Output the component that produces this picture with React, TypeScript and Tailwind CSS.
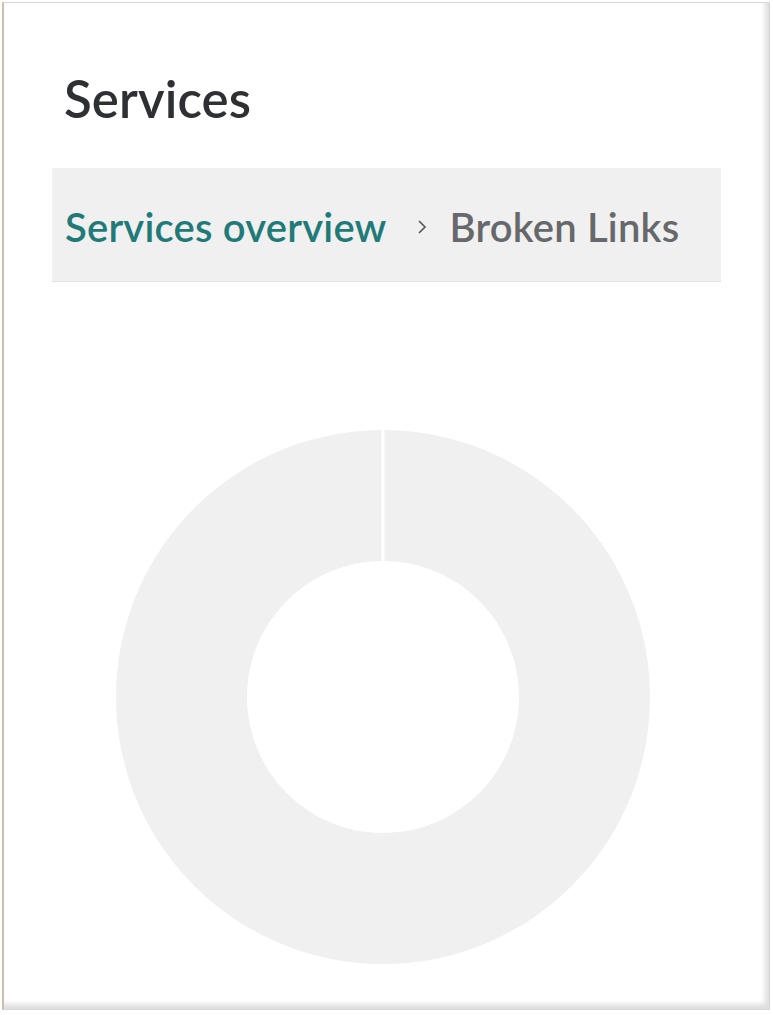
import React from "react";

// donut arc, single value with a thin gap at 12 o'clock
function arcPath(cx: number, cy: number, rOut: number, rIn: number, gap: number) {
  const a0 = (gap / rOut) * 0.5;
  const b0 = (gap / rIn) * 0.5;
  const pt = (r: number, a: number) => [cx + r * Math.sin(a), cy - r * Math.cos(a)];
  const [x1, y1] = pt(rOut, a0);
  const [x2, y2] = pt(rOut, Math.PI * 2 - a0);
  const [x3, y3] = pt(rIn, Math.PI * 2 - b0);
  const [x4, y4] = pt(rIn, b0);
  return `M${x1} ${y1} A${rOut} ${rOut} 0 1 1 ${x2} ${y2} L${x3} ${y3} A${rIn} ${rIn} 0 1 0 ${x4} ${y4} Z`;
}

function Donut() {
  const size = 536;
  const c = size / 2;
  return (
    <svg width={size} height={size} viewBox={`0 0 ${size} ${size}`}>
      <path d={arcPath(c, c, 267, 136, 3)} fill="#f0f0f0" />
    </svg>
  );
}

export default function App() {
  return (
    <div className="w-[773px] h-[1015px] bg-white pt-[2px] pl-[2px] overflow-hidden">
      <div
        className="w-[768px] h-[1008px] bg-white border border-[#d6d6d6] border-l-[2px] border-l-[#cdbfb0] shadow-[inset_-4px_-5px_5px_rgba(0,0,0,0.13)] pl-[48px] pr-[48px]"
        style={{ fontFamily: "Lato, 'Liberation Sans', sans-serif" }}
      >
        <h1 className="pt-[70px] pl-[12px] text-[51px] leading-none font-semibold text-[#2e3034] tracking-[0.1px]">
          Services
        </h1>

        <nav className="mt-[44px] h-[114px] bg-[#f0f0f0] border-b border-[#e2e2e2] flex items-center pt-[4px] pl-[13px] text-[40px] font-semibold tracking-[0.2px]">
          <span className="text-[#1f7a78]">Services overview</span>
          <span className="ml-[29px] mr-[22px] flex items-center">
            <svg width="12" height="16" viewBox="0 0 12 16" fill="none">
              <path d="M3 2l6 6-6 6" stroke="#555" strokeWidth="1.6" />
            </svg>
          </span>
          <span className="text-[#66686b]">Broken Links</span>
        </nav>

        <div className="mt-[147px] ml-[63px]">
          <Donut />
        </div>
      </div>
    </div>
  );
}
